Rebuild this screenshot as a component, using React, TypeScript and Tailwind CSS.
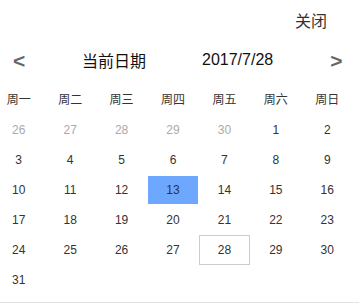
import React from "react";

// Weekday labels, Monday first
const WEEKDAYS = ["周一", "周二", "周三", "周四", "周五", "周六", "周日"];

type Day = { n: number; other?: boolean };

// July 2017, padded with the end of June
const buildDays = (): Day[] => {
  const days: Day[] = [];
  for (let i = 26; i <= 30; i++) days.push({ n: i, other: true });
  for (let i = 1; i <= 31; i++) days.push({ n: i });
  return days;
};

const App = () => {
  const days = buildDays();
  const today = 28;
  const picked = 13;

  return (
    <div
      className="w-[359px] h-[303px] bg-white border-b border-[#e3e3e3] overflow-hidden"
      style={{ fontFamily: '"Liberation Sans", Arial, "Noto Sans CJK SC", sans-serif' }}
    >
      {/* top bar */}
      <div className="h-[44px] flex items-center justify-end pr-[32px]">
        <span className="text-[16px] text-[#333]">关闭</span>
      </div>

      {/* month nav */}
      <div className="h-[32px] flex items-center text-[#111]">
        <span className="ml-[13px] w-[12px] text-[21px] font-bold text-[#666] leading-none">&lt;</span>
        <span className="ml-[57px] text-[16px] leading-none mt-[3px]">当前日期</span>
        <span className="ml-[56px] text-[16px] leading-none">2017/7/28</span>
        <span className="ml-[57px] w-[12px] text-[21px] font-bold text-[#666] leading-none">&gt;</span>
      </div>

      {/* calendar grid */}
      <div className="mt-[9px] ml-[-7px] w-[360px] grid grid-cols-7">
        {WEEKDAYS.map((w) => (
          <div key={w} className="h-[30px] flex items-center justify-center text-[12px] text-[#333]">
            {w}
          </div>
        ))}
        {days.map((d, i) => {
          const isPicked = !d.other && d.n === picked;
          const isToday = !d.other && d.n === today;
          return (
            <div
              key={i}
              className={
                "h-[30px] flex items-center justify-center text-[12px] border " +
                (isPicked
                  ? "bg-[#6ea8fe] border-white text-[#333]"
                  : isToday
                  ? "border-[#cccccc] text-[#333]"
                  : "border-transparent " + (d.other ? "text-[#aaaaaa]" : "text-[#333]"))
              }
            >
              {d.n}
            </div>
          );
        })}
      </div>
    </div>
  );
};

export default App;
